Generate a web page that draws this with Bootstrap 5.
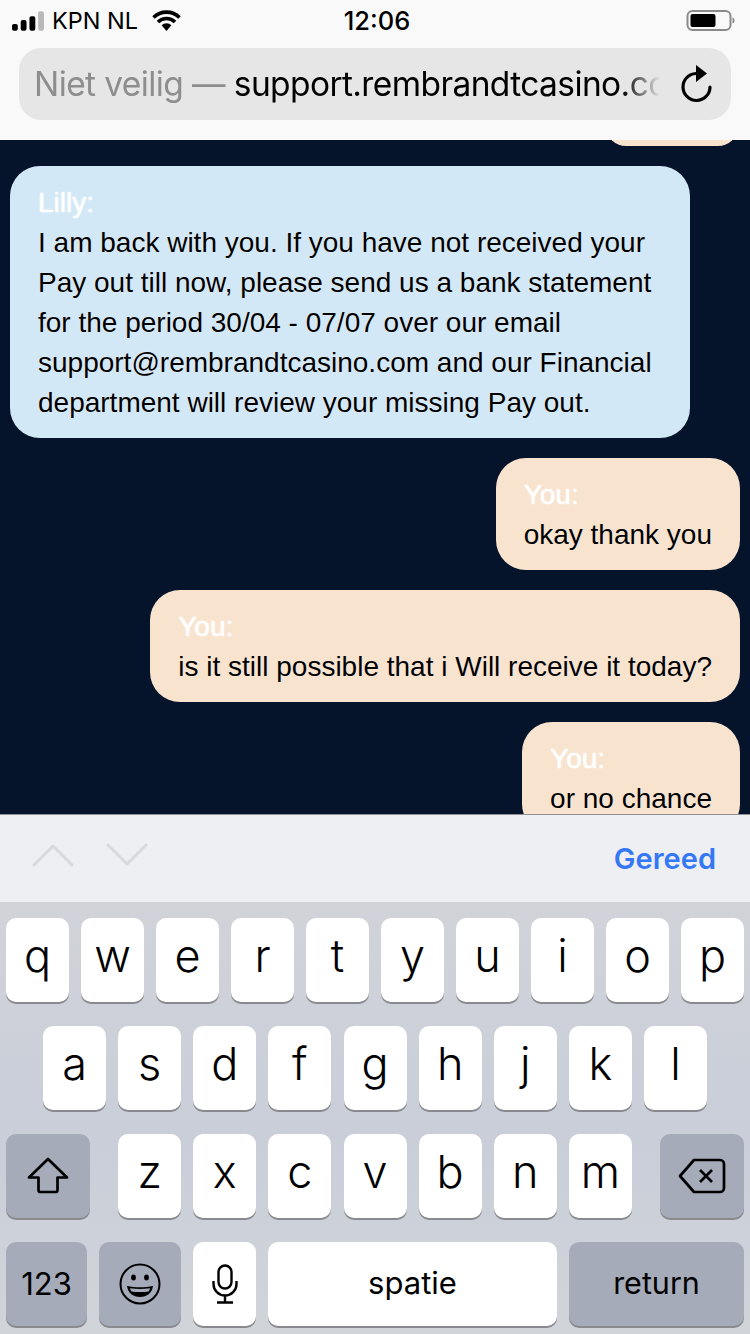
<!DOCTYPE html>
<html lang="en">
<head>
    <meta charset="UTF-8">
    <meta name="viewport" content="width=device-width, initial-scale=1.0">
    <title>Chat</title>
    <link href="https://cdn.jsdelivr.net/npm/bootstrap@5.3.0/dist/css/bootstrap.min.css" rel="stylesheet">
    <style>
        html, body { margin: 0; height: 1334px; overflow: hidden; }
        body { font-family: 'Inter', 'Liberation Sans', sans-serif; background-color: #f9f9f9; color: #000; }
        .screen { width: 750px; height: 1334px; }
        .browser-top { height: 140px; background-color: #f9f9f9; padding: 0 19px; }
        .status-row { height: 48px; padding: 0 0 7px 0; margin: 0 -19px; font-size: 23.5px; position: relative; }
        .status-left { padding-left: 12px; gap: 8px; }
        .wifi-icon { margin-left: 6px; }
        .status-time { position: absolute; left: 0; right: 0; top: 6px; text-align: center; font-weight: 500; font-size: 25.5px; padding-left: 4px; line-height: 30px; }
        .status-right { padding-right: 15px; }
        .url-pill { height: 72px; background-color: #e6e6e6; border-radius: 22px; padding: 0 18px 0 15px; font-size: 33.5px; letter-spacing: -0.6px; }
        .url-text { width: 626px; white-space: nowrap; overflow: hidden; -webkit-mask-image: linear-gradient(to right, #000 94%, transparent 100%); mask-image: linear-gradient(to right, #000 94%, transparent 100%); }
        .url-muted { color: #8e8e8e; }

        .chat-pane { height: 674px; background-color: #05132b; overflow: hidden; padding: 0 10px; gap: 20px; font-family: 'Liberation Sans', sans-serif; font-size: 28px; line-height: 40px; }
        .bubble { border-radius: 30px; padding: 17px 28px 15px; flex-shrink: 0; text-shadow: 0 0 1px rgba(255, 255, 255, .7); }
        .bubble-agent { background-color: #d3e8f6; width: 680px; }
        .bubble-user { background-color: #f8e3cf; align-self: flex-end; white-space: nowrap; }
        .bubble-clipped { height: 40px; width: 132px; margin-top: -34px; padding: 0; margin-right: 2px; }
        .who { color: #fff; text-shadow: 0 0 2px #fff; }

        .accessory { height: 88px; background-color: #eeeff2; border-top: 1px solid #8f9197; padding: 0 34px 0 32px; }
        .accessory svg { display: block; }
        .chevrons { gap: 32px; }
        .done { color: #3478f6; font-weight: 600; font-size: 29px; }

        .keyboard { height: 432px; padding: 16px 6px 0; gap: 24px; background: linear-gradient(to bottom, #d1d3d9, #c9ced9 55%, #d1d4d9); }
        .key-row { gap: 12px; height: 84px; }
        .key-row.inset { padding: 0 37px; gap: 12.125px; }
        .key-row.spread { gap: 12.125px; }
        .key { background-color: #fff; border-radius: 10px; box-shadow: 0 2px 0 #898a8e; height: 84px; width: 63px; flex: none; font-size: 45px; font-weight: 300; padding-bottom: 8px; }
        .key-dark { background-color: #a5abb8; }
        .key-shift { width: 84px; margin-right: 16px; padding-bottom: 0; }
        .key-back { width: 84px; margin-left: auto; padding-bottom: 0; }
        .key-num { width: 81px; font-size: 31px; font-weight: 400; padding-bottom: 0; }
        .key-emoji { width: 82px; padding-bottom: 0; }
        .key-mic { padding-bottom: 0; }
        .key-space { width: 289px; font-size: 31px; font-weight: 400; padding-bottom: 2px; }
        .key-return { width: 175px; font-size: 30.5px; font-weight: 400; padding-bottom: 2px; }
    </style>
</head>
<body>
    <div class="screen d-flex flex-column">
        <div class="browser-top">
            <div class="status-row d-flex justify-content-between align-items-center">
                <div class="status-left d-flex align-items-center">
                    <svg width="32" height="20" viewBox="0 0 33 20">
                        <rect x="0" y="13" width="6" height="7" rx="2" fill="#000"/>
                        <rect x="9" y="9" width="6" height="11" rx="2" fill="#000"/>
                        <rect x="18" y="5" width="6" height="15" rx="2" fill="#000"/>
                        <rect x="27" y="0" width="6" height="20" rx="2" fill="#b9b9b9"/>
                    </svg>
                    <span>KPN NL</span>
                    <svg class="wifi-icon" width="29" height="21" viewBox="0 0 29 21">
                        <path d="M1.5 7.5a18.5 18.5 0 0 1 26 0M6 12a12.2 12.2 0 0 1 17 0" fill="none" stroke="#000" stroke-width="3.6"/>
                        <path d="M9.6 15.2a7 7 0 0 1 9.8 0L14.5 21z" fill="#000"/>
                    </svg>
                </div>
                <div class="status-time">12:06</div>
                <div class="status-right d-flex align-items-center">
                    <svg width="49" height="21" viewBox="0 0 48 21">
                        <rect x="1" y="1" width="43" height="19" rx="5" fill="none" stroke="#8a8a8a" stroke-width="2"/>
                        <rect x="4" y="4" width="25" height="13" rx="2" fill="#000"/>
                        <path d="M46 7.5c1.5.4 2 1.5 2 3s-.5 2.6-2 3z" fill="#8a8a8a"/>
                    </svg>
                </div>
            </div>
            <div class="url-pill d-flex justify-content-between align-items-center">
                <div class="url-text"><span class="url-muted">Niet veilig — </span>support.rembrandtcasino.com</div>
                <svg width="32" height="38" viewBox="0 0 32 38">
                    <path d="M15 8.5A13.5 13.5 0 1 0 29 22" fill="none" stroke="#000" stroke-width="3.2" stroke-linecap="round"/>
                    <path d="M15 0l11 8.5L15 17z" fill="#000"/>
                </svg>
            </div>
        </div>

        <div class="chat-pane d-flex flex-column">
            <div class="bubble bubble-user bubble-clipped"></div>
            <div class="bubble bubble-agent">
                <div class="who">Lilly:</div>
                I am back with you. If you have not received your<br>
                Pay out till now, please send us a bank statement<br>
                for the period 30/04 - 07/07 over our email<br>
                support@rembrandtcasino.com and our Financial<br>
                department will review your missing Pay out.
            </div>
            <div class="bubble bubble-user">
                <div class="who">You:</div>
                okay thank you
            </div>
            <div class="bubble bubble-user">
                <div class="who">You:</div>
                is it still possible that i Will receive it today?
            </div>
            <div class="bubble bubble-user">
                <div class="who">You:</div>
                or no chance
            </div>
        </div>

        <div class="accessory d-flex justify-content-between align-items-center">
            <div class="chevrons d-flex pb-2">
                <svg width="42" height="24" viewBox="0 0 42 24"><path d="M2 22L21 3l19 19" fill="none" stroke="#d8d9dc" stroke-width="3" stroke-linecap="round" stroke-linejoin="round"/></svg>
                <svg width="42" height="24" viewBox="0 0 42 24"><path d="M2 2l19 19L40 2" fill="none" stroke="#d8d9dc" stroke-width="3" stroke-linecap="round" stroke-linejoin="round"/></svg>
            </div>
            <span class="done">Gereed</span>
        </div>

        <div class="keyboard d-flex flex-column">
            <div class="key-row d-flex">
                <div class="key d-flex justify-content-center align-items-center">q</div>
                <div class="key d-flex justify-content-center align-items-center">w</div>
                <div class="key d-flex justify-content-center align-items-center">e</div>
                <div class="key d-flex justify-content-center align-items-center">r</div>
                <div class="key d-flex justify-content-center align-items-center">t</div>
                <div class="key d-flex justify-content-center align-items-center">y</div>
                <div class="key d-flex justify-content-center align-items-center">u</div>
                <div class="key d-flex justify-content-center align-items-center">i</div>
                <div class="key d-flex justify-content-center align-items-center">o</div>
                <div class="key d-flex justify-content-center align-items-center">p</div>
            </div>
            <div class="key-row inset d-flex">
                <div class="key d-flex justify-content-center align-items-center">a</div>
                <div class="key d-flex justify-content-center align-items-center">s</div>
                <div class="key d-flex justify-content-center align-items-center">d</div>
                <div class="key d-flex justify-content-center align-items-center">f</div>
                <div class="key d-flex justify-content-center align-items-center">g</div>
                <div class="key d-flex justify-content-center align-items-center">h</div>
                <div class="key d-flex justify-content-center align-items-center">j</div>
                <div class="key d-flex justify-content-center align-items-center">k</div>
                <div class="key d-flex justify-content-center align-items-center">l</div>
            </div>
            <div class="key-row spread d-flex">
                <div class="key key-dark key-shift d-flex justify-content-center align-items-center">
                    <svg width="42" height="38" viewBox="0 0 42 38"><path d="M21 2L2 20.500h9.500V33a2 2 0 0 0 2 2h15a2 2 0 0 0 2-2V20.500H40z" fill="none" stroke="#000" stroke-width="2.7" stroke-linejoin="round"/></svg>
                </div>
                <div class="key d-flex justify-content-center align-items-center">z</div>
                <div class="key d-flex justify-content-center align-items-center">x</div>
                <div class="key d-flex justify-content-center align-items-center">c</div>
                <div class="key d-flex justify-content-center align-items-center">v</div>
                <div class="key d-flex justify-content-center align-items-center">b</div>
                <div class="key d-flex justify-content-center align-items-center">n</div>
                <div class="key d-flex justify-content-center align-items-center">m</div>
                <div class="key key-dark key-back d-flex justify-content-center align-items-center">
                    <svg width="48" height="36" viewBox="0 0 48 36"><path d="M16 2h26a4 4 0 0 1 4 4v24a4 4 0 0 1-4 4H16L2 18z" fill="none" stroke="#000" stroke-width="2.7" stroke-linejoin="round"/><path d="M22 12l12 12M34 12L22 24" fill="none" stroke="#000" stroke-width="2.7"/></svg>
                </div>
            </div>
            <div class="key-row d-flex">
                <div class="key key-dark key-num d-flex justify-content-center align-items-center">123</div>
                <div class="key key-dark key-emoji d-flex justify-content-center align-items-center">
                    <svg width="42" height="42" viewBox="0 0 42 42"><circle cx="21" cy="21" r="19.500" fill="none" stroke="#000" stroke-width="2"/><ellipse cx="14.500" cy="14.500" rx="2.400" ry="3" fill="#000"/><ellipse cx="27.500" cy="14.500" rx="2.400" ry="3" fill="#000"/><path d="M8 23c8 1.800 18 1.800 26 0-1 7-6 11-13 11S9 30 8 23z" fill="#000"/><path d="M11 25.200c6.500 1.100 13.500 1.100 20 0-.3 1.300-.8 2.300-1.400 3.200-5.500.8-11.700.8-17.200 0-.6-.9-1.100-1.900-1.400-3.200z" fill="#a5abb8"/></svg>
                </div>
                <div class="key key-mic d-flex justify-content-center align-items-center">
                    <svg width="26" height="40" viewBox="0 0 26 40"><rect x="6.500" y="1.500" width="13" height="23" rx="6.500" fill="none" stroke="#000" stroke-width="2.4"/><path d="M1.500 17v3a11.500 11.500 0 0 0 23 0v-3M13 31.500v6M5 38.500h16" fill="none" stroke="#000" stroke-width="2.4"/></svg>
                </div>
                <div class="key key-space d-flex justify-content-center align-items-center">spatie</div>
                <div class="key key-dark key-return d-flex justify-content-center align-items-center">return</div>
            </div>
        </div>
    </div>
    <script src="https://cdn.jsdelivr.net/npm/bootstrap@5.3.0/dist/js/bootstrap.bundle.min.js"></script>
</body>
</html>
